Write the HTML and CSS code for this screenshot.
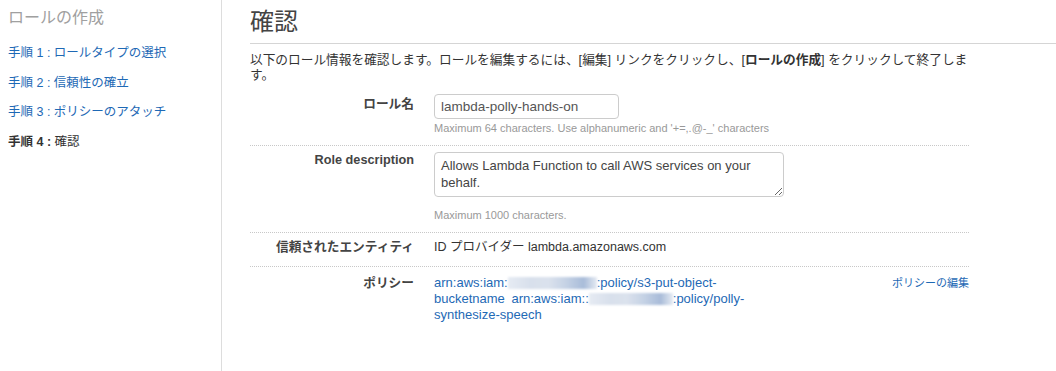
FILE: index.html
```html
<!DOCTYPE html>
<html lang="ja">
<head>
  <meta charset="UTF-8">
  <meta name="viewport" content="width=device-width, initial-scale=1.0">
  <title>ロールの作成 - 確認</title>
  <link rel="stylesheet" href="styles.css">
</head>
<body>
  <div class="page">
    <aside class="sidebar">
      <h2 class="sidebar-title">ロールの作成</h2>
      <ul class="steps">
        <li><a href="#">手順 1 : ロールタイプの選択</a></li>
        <li><a href="#">手順 2 : 信頼性の確立</a></li>
        <li><a href="#">手順 3 : ポリシーのアタッチ</a></li>
        <li class="current"><b>手順 4 :</b> 確認</li>
      </ul>
    </aside>

    <main class="content">
      <h1>確認</h1>
      <p class="intro">以下のロール情報を確認します。ロールを編集するには、[編集] リンクをクリックし、[<b>ロールの作成</b>] をクリックして終了します。</p>

      <div class="review">
        <div class="row">
          <div class="label label-input">ロール名</div>
          <div class="value">
            <input class="name-input" type="text" value="lambda-polly-hands-on">
            <div class="hint">Maximum 64 characters. Use alphanumeric and '+=,.@-_' characters</div>
          </div>
        </div>

        <div class="row">
          <div class="label">Role description</div>
          <div class="value">
            <textarea class="desc-input">Allows Lambda Function to call AWS services on your behalf.</textarea>
            <div class="hint hint-below">Maximum 1000 characters.</div>
          </div>
        </div>

        <div class="row">
          <div class="label">信頼されたエンティティ</div>
          <div class="value">ID プロバイダー lambda.amazonaws.com</div>
        </div>

        <div class="row row-policy">
          <div class="label">ポリシー</div>
          <div class="value value-split">
            <div class="policies">
              <a class="policy-link" href="#">arn:aws:iam:<span class="masked"></span>:policy/s3-put-object-bucketname</a>
              <a class="policy-link" href="#">arn:aws:iam::<span class="masked masked-short"></span>:policy/polly-synthesize-speech</a>
            </div>
            <a class="edit-link" href="#">ポリシーの編集</a>
          </div>
        </div>
      </div>
    </main>
  </div>
</body>
</html>
```

FILE: styles.css
```css
body {
  margin: 0;
  font-family: 'Liberation Sans', 'Noto Sans CJK JP', sans-serif;
  font-size: 12.5px;
  color: #333;
  background: #fff;
}

a {
  color: #1e69b5;
  text-decoration: none;
}

.page {
  display: flex;
  min-height: 100vh;
}

/* left wizard steps */
.sidebar {
  width: 213px;
  padding-left: 8px;
  border-right: 1px solid #ddd;
  flex-shrink: 0;
}

.sidebar-title {
  margin: 8px 0 0;
  font-size: 16px;
  line-height: 20px;
  font-weight: normal;
  color: #a0a0a0;
}

.steps {
  list-style: none;
  margin: 17px 0 0;
  padding: 0;
}

.steps li {
  line-height: 16px;
  margin-bottom: 13.7px;
}

.steps .current {
  color: #333;
}

/* main review panel */
.content {
  flex: 1;
  padding-left: 28px;
}

.content h1 {
  margin: 0;
  padding: 8px 0 7px;
  font-size: 24px;
  line-height: 28px;
  font-weight: normal;
  color: #444;
  border-bottom: 1px solid #d5d5d5;
}

.intro {
  width: 720px;
  margin: 9px 0 0;
  font-size: 12.7px;
  line-height: 15px;
}

.review {
  width: 719px;
  margin-top: 5px;
}

.row {
  display: flex;
  gap: 20px;
  padding: 6px 0 11px;
  border-bottom: 1px dotted #c8c8c8;
}

.row-policy {
  padding-top: 8px;
  border-bottom: none;
}

.label {
  width: 164px;
  flex-shrink: 0;
  text-align: right;
  font-weight: bold;
  font-size: 12.7px;
  color: #444;
  line-height: 16px;
}

.label-input {
  padding-top: 2px;
}

.value {
  flex: 1;
  line-height: 16px;
}

.name-input {
  display: block;
  box-sizing: border-box;
  width: 185px;
  height: 25px;
  margin: 0;
  padding: 0 6px;
  border: 1px solid #ccc;
  border-radius: 4px;
  font-family: 'Liberation Sans', sans-serif;
  font-size: 13.5px;
  color: #555;
}

.desc-input {
  display: block;
  box-sizing: border-box;
  width: 350px;
  height: 45px;
  margin: 0;
  padding: 4px 6px;
  border: 1px solid #ccc;
  border-radius: 4px;
  font-family: 'Liberation Sans', sans-serif;
  font-size: 13px;
  line-height: 17px;
  color: #444;
  resize: vertical;
}

.hint {
  margin-top: 3px;
  font-size: 11px;
  line-height: 12px;
  color: #999;
}

.hint-below {
  margin-top: 12px;
}

.value-split {
  display: flex;
  justify-content: space-between;
}

.policies {
  width: 324px;
  font-size: 13px;
}

.policy-link:first-child {
  margin-right: 3px;
}

/* blurred account id */
.masked {
  display: inline-block;
  width: 89px;
  height: 12px;
  vertical-align: -2px;
  background: linear-gradient(90deg, #e6ebf3, #d8e0ec 25%, #dbe2ed 45%, #c5d2e5 65%, #a9bcd9 85%, #e6ebf3);
  filter: blur(1px);
}

.masked-short {
  width: 84px;
}

.edit-link {
  font-size: 11px;
  white-space: nowrap;
}
```
